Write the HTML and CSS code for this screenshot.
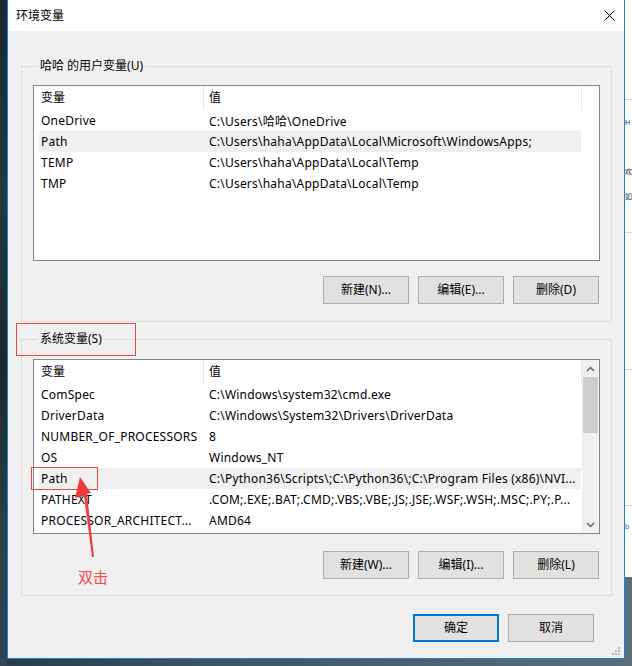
FILE: index.html
```html
<!DOCTYPE html>
<html lang="zh-CN">
<head>
<meta charset="utf-8">
<title>环境变量</title>
<link rel="stylesheet" href="styles.css">
</head>
<body>
<div class="desk">
  <div class="edge-left"></div>
  <div class="window">
    <div class="titlebar">
      <span class="title">环境变量</span>
      <svg class="close" width="11" height="11" viewBox="0 0 11 11"><path d="M0.5 0.5L10.5 10.5M10.5 0.5L0.5 10.5" stroke="#000" stroke-width="1" fill="none"/></svg>
    </div>
    <div class="client">
      <div class="group group-user">
        <div class="legend">哈哈 的用户变量(U)</div>
        <div class="list list-user">
          <div class="lv-body">
            <div class="lv-head"><div class="h1">变量</div><div class="h2">值</div></div>
            <div class="row"><span class="c1">OneDrive</span><span class="c2">C:\Users\哈哈\OneDrive</span></div>
            <div class="row sel"><span class="c1">Path</span><span class="c2">C:\Users\haha\AppData\Local\Microsoft\WindowsApps;</span></div>
            <div class="row"><span class="c1">TEMP</span><span class="c2">C:\Users\haha\AppData\Local\Temp</span></div>
            <div class="row"><span class="c1">TMP</span><span class="c2">C:\Users\haha\AppData\Local\Temp</span></div>
          </div>
        </div>
        <div class="btns">
          <button class="btn">新建(N)...</button>
          <button class="btn">编辑(E)...</button>
          <button class="btn">删除(D)</button>
        </div>
      </div>
      <div class="group group-sys">
        <div class="legend">系统变量(S)</div>
        <div class="list list-sys">
          <div class="lv-body">
            <div class="lv-head"><div class="h1">变量</div><div class="h2">值</div></div>
            <div class="row"><span class="c1">ComSpec</span><span class="c2">C:\Windows\system32\cmd.exe</span></div>
            <div class="row"><span class="c1">DriverData</span><span class="c2">C:\Windows\System32\Drivers\DriverData</span></div>
            <div class="row"><span class="c1">NUMBER_OF_PROCESSORS</span><span class="c2">8</span></div>
            <div class="row"><span class="c1">OS</span><span class="c2">Windows_NT</span></div>
            <div class="row sel"><span class="c1">Path</span><span class="c2">C:\Python36\Scripts\;C:\Python36\;C:\Program Files (x86)\NVI...</span></div>
            <div class="row"><span class="c1">PATHEXT</span><span class="c2">.COM;.EXE;.BAT;.CMD;.VBS;.VBE;.JS;.JSE;.WSF;.WSH;.MSC;.PY;.P...</span></div>
            <div class="row"><span class="c1">PROCESSOR_ARCHITECT...</span><span class="c2">AMD64</span></div>
          </div>
          <div class="scrollbar">
            <div class="sb-arrow"><svg width="9" height="6" viewBox="0 0 9 6"><path d="M1 5L4.5 1.5L8 5" stroke="#606060" stroke-width="1.4" fill="none"/></svg></div>
            <div class="sb-thumb"></div>
            <div class="sb-track"></div>
            <div class="sb-arrow"><svg width="9" height="6" viewBox="0 0 9 6"><path d="M1 1L4.5 4.5L8 1" stroke="#606060" stroke-width="1.4" fill="none"/></svg></div>
          </div>
        </div>
        <div class="btns btns-sys">
          <button class="btn">新建(W)...</button>
          <button class="btn">编辑(I)...</button>
          <button class="btn">删除(L)</button>
        </div>
      </div>
      <div class="footer">
        <button class="btn btn-default">确定</button>
        <button class="btn">取消</button>
      </div>
    </div>
    <svg class="grip" width="8" height="8" viewBox="0 0 8 8">
      <rect x="6" y="0" width="2" height="2" fill="#b8b8b8"/>
      <rect x="3" y="3" width="2" height="2" fill="#b8b8b8"/>
      <rect x="6" y="3" width="2" height="2" fill="#b8b8b8"/>
      <rect x="0" y="6" width="2" height="2" fill="#b8b8b8"/>
      <rect x="3" y="6" width="2" height="2" fill="#b8b8b8"/>
      <rect x="6" y="6" width="2" height="2" fill="#b8b8b8"/>
    </svg>
  </div>
  <div class="edge-right">
    <div class="er-block er-top"></div>
    <div class="er-text er-h">H</div>
    <div class="er-text er-cjk1">欢</div>
    <div class="er-text er-cjk2">如</div>
    <div class="er-block er-b2"></div>
    <div class="er-block er-b3"></div>
    <div class="er-block er-b4"></div>
    <div class="er-text er-link">b</div>
  </div>
</div>

<div class="anno-box anno-sys"></div>
<div class="anno-box anno-path"></div>
<svg class="anno-arrow" width="632" height="666" viewBox="0 0 632 666">
  <polygon points="80,477 91,493 87,494 94,557 92,557 84,496 75,498" fill="#f23b3b"/>
</svg>
<div class="anno-text">双击</div>
</body>
</html>
```

FILE: styles.css
```css
* {
  box-sizing: border-box;
}

html,
body {
  margin: 0;
  padding: 0;
}

body {
  width: 632px;
  height: 666px;
  overflow: hidden;
  position: relative;
  font-family: "Noto Sans", "Noto Sans CJK SC", sans-serif;
  font-size: 12px;
  color: #000;
  background: linear-gradient(90deg, #2a3c46 0%, #3d5664 35%, #4c6470 70%, #5a6e78 100%);
}

.desk {
  display: flex;
  align-items: flex-start;
  height: 666px;
}

.edge-left {
  width: 7px;
  height: 666px;
  flex: none;
  background: linear-gradient(180deg, #1b2831 0%, #27363f 30%, #1c2830 55%, #2d3d46 80%, #32444e 100%);
}

/* ---------- window ---------- */
.window {
  width: 618px;
  height: 659px;
  flex: none;
  border: 1px solid #1883d7;
  border-top: 0;
  background: #f0f0f0;
  display: flex;
  flex-direction: column;
  position: relative;
}

.titlebar {
  height: 31px;
  flex: none;
  background: #fff;
  display: flex;
  align-items: center;
  justify-content: space-between;
  padding: 0 9px 0 8px;
}

.title {
  font-size: 12px;
  line-height: 16px;
}

.close {
  display: block;
}

.client {
  flex: 1;
  padding: 35px 12px 0 13px;
  display: flex;
  flex-direction: column;
}

/* ---------- group boxes ---------- */
.group {
  border: 1px solid #dcdcdc;
  display: flex;
  flex-direction: column;
  padding: 0 11px 17px 11px;
}

.group-sys {
  margin-top: 17px;
  padding-bottom: 16px;
}

.legend {
  align-self: flex-start;
  height: 16px;
  line-height: 16px;
  margin: -9px 0 0 5px;
  padding: 0 2px;
  background: #f0f0f0;
}

/* ---------- list views ---------- */
.list {
  border: 1px solid #828790;
  background: #fff;
  display: flex;
  overflow: hidden;
}

.list-user {
  margin-top: 11px;
  height: 176px;
}

.list-sys {
  margin-top: 12px;
  height: 175px;
}

.lv-body {
  flex: 1;
  min-width: 0;
  display: flex;
  flex-direction: column;
}

.lv-head {
  height: 24px;
  display: flex;
  flex: none;
}

.h1,
.h2 {
  line-height: 24px;
  border-right: 1px solid #e5e5e5;
}

.h1 {
  width: 170px;
  padding-left: 7px;
}

.h2 {
  width: 378px;
  padding-left: 5px;
}

.row {
  height: 21px;
  flex: none;
  margin-left: 5px;
  width: 542px;
  display: flex;
  align-items: center;
  white-space: nowrap;
  letter-spacing: 0.22px;
}

.row.sel {
  background: #f0f0f0;
}

.c1 {
  width: 170px;
  flex: none;
  padding: 0 4px 0 2px;
  overflow: hidden;
}

.c2 {
  flex: 1;
  min-width: 0;
  overflow: hidden;
}

/* ---------- scrollbar ---------- */
.scrollbar {
  width: 17px;
  flex: none;
  background: #f0f0f0;
  display: flex;
  flex-direction: column;
}

.sb-arrow {
  height: 17px;
  flex: none;
  display: flex;
  align-items: center;
  justify-content: center;
}

.sb-arrow svg {
  display: block;
}

.sb-thumb {
  height: 56px;
  flex: none;
  margin: 0 1px;
  background: #cdcdcd;
}

.sb-track {
  flex: 1;
}

/* ---------- buttons ---------- */
.btns {
  display: flex;
  justify-content: flex-end;
  gap: 9px;
  margin-top: 15px;
  padding-right: 1px;
}

.btns-sys {
  margin-top: 17px;
}

.btn {
  width: 86px;
  height: 28px;
  padding: 0;
  margin: 0;
  border: 1px solid #adadad;
  background: #e1e1e1;
  font-family: inherit;
  font-size: 12px;
  color: #000;
  line-height: 16px;
}

.btn-default {
  border: 2px solid #0078d7;
}

.footer {
  display: flex;
  justify-content: flex-end;
  gap: 9px;
  margin-top: 18px;
  padding-right: 18px;
}

.grip {
  position: absolute;
  right: 4px;
  bottom: 3px;
  display: block;
}

/* ---------- window behind, on the right ---------- */
.edge-right {
  width: 7px;
  height: 577px;
  flex: none;
  background: #fff;
  overflow: hidden;
  display: flex;
  flex-direction: column;
}

.er-block {
  flex: none;
  border-bottom: 1px solid #d6d6d6;
}

.er-top {
  height: 100px;
}

.er-b2 {
  height: 28px;
}

.er-b3 {
  height: 137px;
}

.er-b4 {
  height: 136px;
}

.er-text {
  flex: none;
  height: 16px;
  line-height: 16px;
  font-size: 7px;
  white-space: nowrap;
  color: #2a2a2a;
}

.er-h {
  margin-top: 15px;
}

.er-cjk1 {
  margin-top: 33px;
}

.er-cjk2 {
  margin-top: 9px;
}

.er-link {
  margin-top: 13px;
  color: #1a6fc4;
}

/* ---------- red annotations (overlay) ---------- */
.anno-box {
  position: absolute;
  border: 1px solid #ea4646;
}

.anno-sys {
  left: 16px;
  top: 323px;
  width: 120px;
  height: 33px;
}

.anno-path {
  left: 31px;
  top: 467px;
  width: 67px;
  height: 23px;
}

.anno-arrow {
  position: absolute;
  left: 0;
  top: 0;
  pointer-events: none;
}

.anno-text {
  position: absolute;
  left: 78px;
  top: 569px;
  font-family: "Noto Sans CJK SC", sans-serif;
  font-size: 15px;
  line-height: 16px;
  color: #f24848;
}
```
